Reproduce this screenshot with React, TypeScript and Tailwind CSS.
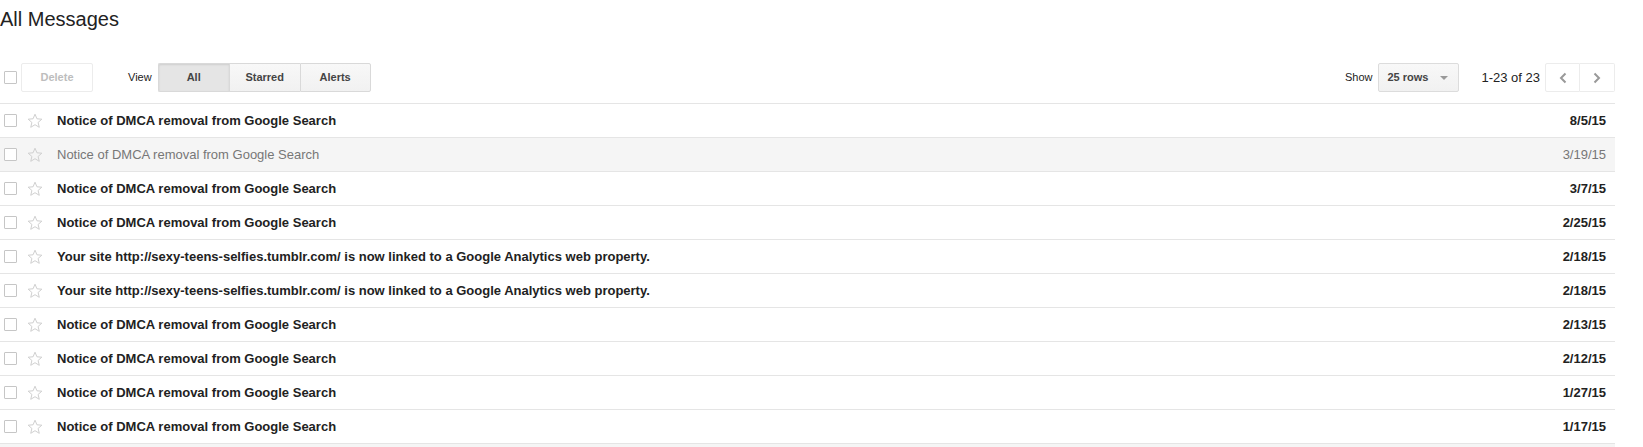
import React from "react";

type Message = { subject: string; date: string; read?: boolean };

const DMCA = "Notice of DMCA removal from Google Search";
const ANALYTICS =
  "Your site http://sexy-teens-selfies.tumblr.com/ is now linked to a Google Analytics web property.";

const messages: Message[] = [
  { subject: DMCA, date: "8/5/15" },
  { subject: DMCA, date: "3/19/15", read: true },
  { subject: DMCA, date: "3/7/15" },
  { subject: DMCA, date: "2/25/15" },
  { subject: ANALYTICS, date: "2/18/15" },
  { subject: ANALYTICS, date: "2/18/15" },
  { subject: DMCA, date: "2/13/15" },
  { subject: DMCA, date: "2/12/15" },
  { subject: DMCA, date: "1/27/15" },
  { subject: DMCA, date: "1/17/15" },
];

function Checkbox() {
  return <span className="block w-[13px] h-[13px] border border-[#c6c6c6] bg-white rounded-[1px] shrink-0" />;
}

function Star() {
  return (
    <svg width="16" height="16" viewBox="0 0 16 16" className="shrink-0">
      <path
        d="M8 1.2l1.95 4.6 4.9.4-3.75 3.25 1.15 4.85L8 11.7l-4.25 2.6 1.15-4.85L1.15 6.2l4.9-.4z"
        fill="none"
        stroke="#d0d0d0"
        strokeWidth="1"
        strokeLinejoin="round"
      />
    </svg>
  );
}

function ViewButton({ label, active, last }: { label: string; active?: boolean; last?: boolean }) {
  return (
    <button
      className={`w-[71px] h-[29px] text-[11px] font-bold text-[#444] border border-[#d9d9d9] ${
        last ? "" : "border-r-0"
      } ${
        active
          ? "bg-[#e5e5e5] border-[#c6c6c6] shadow-[inset_0_1px_2px_rgba(0,0,0,0.1)] text-[#333]"
          : "bg-gradient-to-b from-[#f8f8f8] to-[#f1f1f1]"
      } ${label === "All" ? "rounded-l-[2px]" : ""} ${last ? "rounded-r-[2px]" : ""}`}
    >
      {label}
    </button>
  );
}

export default function App() {
  return (
    <div className="w-[1643px] h-[447px] overflow-hidden bg-white text-[#222]" style={{ fontFamily: '"Liberation Sans", Arial, sans-serif' }}>
      <h1 className="pt-[7px] text-[20px] leading-[24px] font-normal text-[#222]">All Messages</h1>

      <div className="w-[1615px] mt-[32px] h-[29px] flex items-center">
        <div className="pl-[4px] flex items-center">
          <Checkbox />
        </div>
        <button className="ml-[4px] w-[72px] h-[29px] border border-[#ececec] rounded-[2px] bg-white text-[11px] font-bold text-[#bdbdbd]">
          Delete
        </button>
        <span className="ml-[35px] text-[11px] text-[#222]">View</span>
        <div className="ml-[6px] flex">
          <ViewButton label="All" active />
          <ViewButton label="Starred" />
          <ViewButton label="Alerts" last />
        </div>

        <div className="ml-auto flex items-center">
          <span className="text-[11px] text-[#222]">Show</span>
          <div className="ml-[6px] w-[81px] h-[29px] flex items-center justify-between pl-[8px] pr-[10px] border border-[#dcdcdc] rounded-[2px] bg-gradient-to-b from-[#f8f8f8] to-[#f1f1f1]">
            <span className="text-[11px] font-bold text-[#444]">25 rows</span>
            <span className="w-0 h-0 border-l-[4px] border-r-[4px] border-t-[4px] border-l-transparent border-r-transparent border-t-[#999]" />
          </div>
          <span className="ml-[22px] text-[13px] text-[#222]">1-23 of 23</span>
          <div className="ml-[5px] flex">
            <button className="w-[35px] h-[29px] flex items-center justify-center border border-[#ececec] rounded-l-[2px] bg-white">
              <svg width="10" height="12" viewBox="0 0 10 12">
                <path d="M7.5 1.5L3 6l4.5 4.5" fill="none" stroke="#999" strokeWidth="2" />
              </svg>
            </button>
            <button className="w-[35px] h-[29px] flex items-center justify-center border border-l-0 border-[#ececec] rounded-r-[2px] bg-white">
              <svg width="10" height="12" viewBox="0 0 10 12">
                <path d="M2.5 1.5L7 6l-4.5 4.5" fill="none" stroke="#999" strokeWidth="2" />
              </svg>
            </button>
          </div>
        </div>
      </div>

      <div className="w-[1615px] mt-[11px] border-t border-[#e5e5e5] bg-[#f5f5f5] pb-[20px]">
        {messages.map((m, i) => (
          <div
            key={i}
            className={`h-[34px] flex items-center border-b border-[#e5e5e5] pl-[4px] pr-[9px] ${
              m.read ? "bg-[#f5f5f5]" : "bg-white"
            }`}
          >
            <Checkbox />
            <span className="ml-[10px]">
              <Star />
            </span>
            <span className={`ml-[14px] text-[13px] ${m.read ? "font-normal text-[#777]" : "font-bold text-[#222]"}`}>
              {m.subject}
            </span>
            <span className={`ml-auto text-[13px] ${m.read ? "font-normal text-[#777]" : "font-bold text-[#222]"}`}>
              {m.date}
            </span>
          </div>
        ))}
      </div>
    </div>
  );
}
